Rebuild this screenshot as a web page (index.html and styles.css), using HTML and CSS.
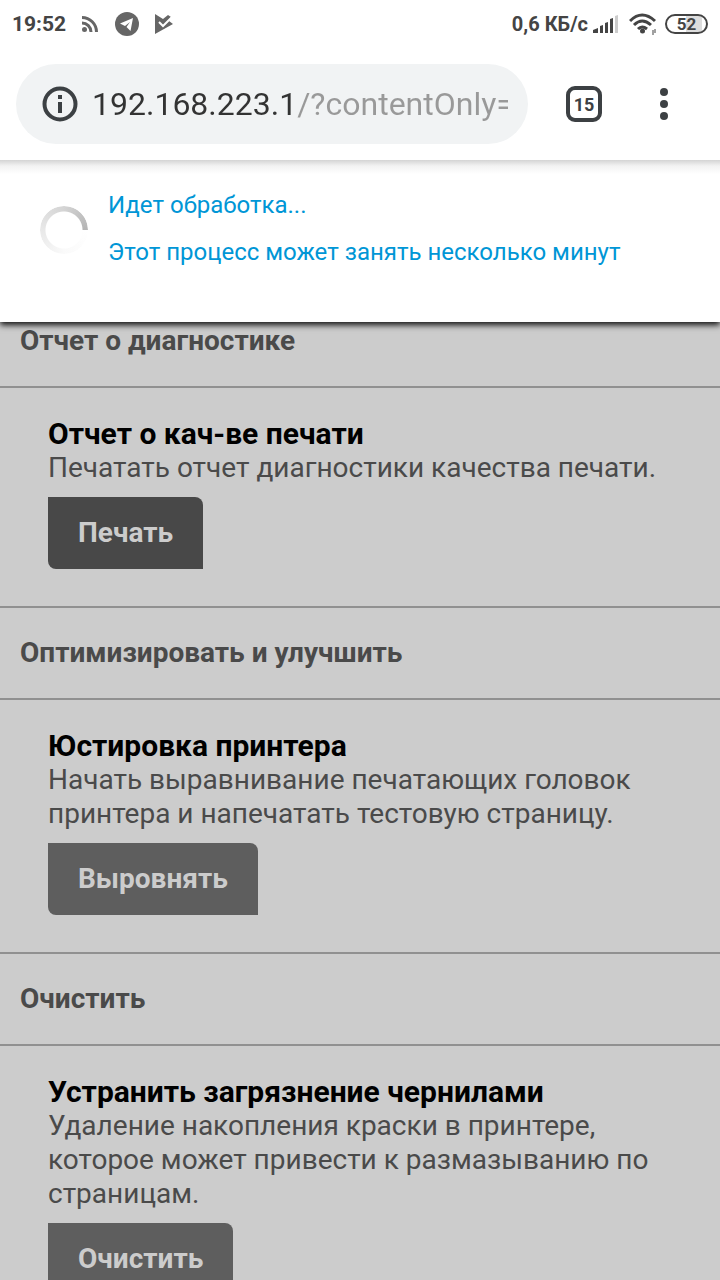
FILE: index.html
```
<!DOCTYPE html>
<html lang="ru">
<head>
    <meta charset="UTF-8">
    <meta name="viewport" content="width=device-width, initial-scale=1.0">
    <title>Отчет о диагностике</title>
    <link rel="stylesheet" href="styles.css">
</head>
<body>
    <div class="status-bar">
        <span class="clock">19:52</span>
        <svg class="icon-rss" width="18" height="18" viewBox="0 0 18 18" fill="none" stroke="#666" stroke-width="3">
            <path d="M1 2.5A14.5 14.5 0 0 1 15.5 17M1 8A9 9 0 0 1 10 17"/>
            <circle cx="3.5" cy="14.5" r="2.5" fill="#666" stroke="none"/>
        </svg>
        <svg class="icon-telegram" width="24" height="24" viewBox="0 0 24 24">
            <circle cx="12" cy="12" r="12" fill="#666"/>
            <path d="M18 6L5 11.5l5 2.5 5-4-3.5 5 4 4z" fill="#fff"/>
        </svg>
        <svg class="icon-play" width="20" height="22" viewBox="0 0 20 22">
            <path d="M1 1L9 6 14 2 17 4 15 8 19 11 1 21z" fill="#666"/>
            <path d="M5 9l4 4 9-9" fill="none" stroke="#fff" stroke-width="2"/>
        </svg>
        <span class="speed">0,6 КБ/с</span>
        <svg class="icon-signal" width="26" height="18" viewBox="0 0 26 18" fill="#444">
            <path d="M0 15l5-2v5H0zM7 11l3-1v8H7zM12 8l3-1v11h-3zM17 4l3-1v15h-3z"/>
            <path d="M22 1l3-1v18h-3z" fill="#ccc"/>
        </svg>
        <svg class="icon-wifi" width="28" height="22" viewBox="0 0 28 22" fill="none" stroke="#444" stroke-width="3">
            <path d="M1 8Q13 -4 26 8M5 12Q13 4 22 12M9 16Q13 12 18 16"/>
            <circle cx="13.5" cy="18" r="2.5" fill="#444" stroke="none"/>
            <path d="M24 17v5M26 16v4" stroke-width="1"/>
        </svg>
        <span class="battery">52</span>
    </div>

    <div class="toolbar">
        <div class="omnibox">
            <svg width="36" height="36" viewBox="0 0 36 36">
                <circle cx="18" cy="18" r="15.5" fill="none" stroke="#3c4043" stroke-width="4"/>
                <path d="M16 9h4v4h-4zM16 16h4v11h-4z" fill="#3c4043"/>
            </svg>
            <input type="text" class="url" aria-label="Адрес" value="192.168.223.1/?contentOnly=true">
        </div>
        <button class="tabs" aria-label="Вкладки: 15">15</button>
        <button class="menu" aria-label="Меню">
            <svg width="8" height="32" viewBox="0 0 8 32" fill="#3c4043">
                <circle cx="4" cy="4" r="4"/>
                <circle cx="4" cy="16" r="4"/>
                <circle cx="4" cy="28" r="4"/>
            </svg>
        </button>
    </div>

    <div class="page">
        <div class="dialog" role="status">
            <div class="spinner"></div>
            <div class="message">
                <p>Идет обработка...</p>
                <p>Этот процесс может занять несколько минут</p>
            </div>
        </div>

        <h2>Отчет о диагностике</h2>
        <section>
            <h3>Отчет о кач-ве печати</h3>
            <p>Печатать отчет диагностики качества печати.</p>
            <button class="action active">Печать</button>
        </section>

        <h2>Оптимизировать и улучшить</h2>
        <section>
            <h3>Юстировка принтера</h3>
            <p>Начать выравнивание печатающих головок принтера и напечатать тестовую страницу.</p>
            <button class="action">Выровнять</button>
        </section>

        <h2>Очистить</h2>
        <section>
            <h3>Устранить загрязнение чернилами</h3>
            <p>Удаление накопления краски в принтере, которое может привести к размазыванию по страницам.</p>
            <button class="action">Очистить</button>
        </section>
    </div>
</body>
</html>
```

FILE: styles.css
```
* {
    box-sizing: border-box;
}

body {
    margin: 0;
    height: 100vh;
    display: flex;
    flex-direction: column;
    overflow: hidden;
    font-family: Roboto, sans-serif;
    background-color: #fff;
}

h2, h3, p {
    margin: 0;
}

button {
    font-family: inherit;
    border: none;
    cursor: pointer;
}

.status-bar {
    display: flex;
    align-items: center;
    flex-shrink: 0;
    height: 48px;
    padding: 0 12px;
    color: #444;
    font-size: 20px;
    font-weight: bold;
}

.clock {
    font-size: 21px;
}

.icon-rss {
    margin-left: 15px;
}

.icon-telegram {
    margin-left: 16px;
}

.icon-play {
    margin-left: 15px;
}

.speed {
    margin-left: auto;
}

.icon-signal {
    margin-left: 5px;
}

.icon-wifi {
    margin-left: 10px;
}

.battery {
    width: 43px;
    height: 20px;
    margin-left: 8px;
    border: 2px solid #444;
    border-radius: 10px;
    background: linear-gradient(to right, #fff 50%, #ddd 50%, #ddd 90%, #fff 90%);
    font-size: 17px;
    line-height: 16px;
    text-align: center;
}

.toolbar {
    display: flex;
    align-items: center;
    flex-shrink: 0;
    height: 112px;
    padding: 0 36px 0 16px;
}

.omnibox {
    display: flex;
    align-items: center;
    flex: 1;
    min-width: 0;
    gap: 14px;
    height: 80px;
    padding: 0 20px 0 26px;
    border-radius: 40px;
    background-color: #f1f3f4;
}

.omnibox svg {
    flex-shrink: 0;
}

.url {
    flex: 1;
    min-width: 0;
    height: 48px;
    padding: 0;
    border: none;
    outline: none;
    font-family: inherit;
    font-size: 32px;
    /* host is dark, the path is grey */
    color: transparent;
    background: linear-gradient(to right, #333 205px, #999 205px);
    -webkit-background-clip: text;
    background-clip: text;
}

.tabs {
    flex-shrink: 0;
    width: 36px;
    height: 36px;
    margin-left: 38px;
    padding: 0;
    border: 4px solid #3c4043;
    border-radius: 9px;
    background: none;
    color: #3c4043;
    font-size: 18px;
    font-weight: bold;
}

.menu {
    display: flex;
    justify-content: center;
    flex-shrink: 0;
    width: 40px;
    margin-left: 42px;
    padding: 0;
    background: none;
}

.page {
    position: relative;
    flex: 1;
    min-height: 0;
    overflow: hidden;
    padding-top: 134px;
    background-color: #ccc;
    color: #4a4a4a;
    font-size: 28px;
    line-height: 34px;
}

.dialog {
    position: absolute;
    top: 0;
    left: 0;
    right: 0;
    display: flex;
    gap: 20px;
    padding: 22px 40px 46px;
    background: linear-gradient(#d4d4d4, #f3f3f3 6px, #fff 14px);
    box-shadow: 0 3px 6px #111;
    color: #0096d6;
    font-size: 24px;
}

.message p {
    line-height: 47px;
}

.spinner {
    flex-shrink: 0;
    width: 48px;
    height: 48px;
    margin-top: 24px;
    border-radius: 50%;
    background: conic-gradient(#d4d4d4, #b4b4b4 25%, #fff 25%, #fafafa 50%, #e8e8e8 75%, #d4d4d4);
    -webkit-mask: radial-gradient(circle, transparent 18px, #000 19px);
    mask: radial-gradient(circle, transparent 18px, #000 19px);
}

h2 {
    padding: 28px 20px;
    border-top: 2px solid #909090;
    border-bottom: 2px solid #909090;
    font-size: 28px;
}

section {
    padding: 29px 48px 37px;
}

h3 {
    color: #000;
    font-size: 30px;
}

.action {
    display: block;
    height: 72px;
    margin-top: 12px;
    padding: 0 30px 2px;
    border-radius: 0 8px;
    background-color: #5e5e5e;
    color: #ccc;
    font-size: 28px;
    font-weight: bold;
}

.action.active {
    background-color: #484848;
}
```
